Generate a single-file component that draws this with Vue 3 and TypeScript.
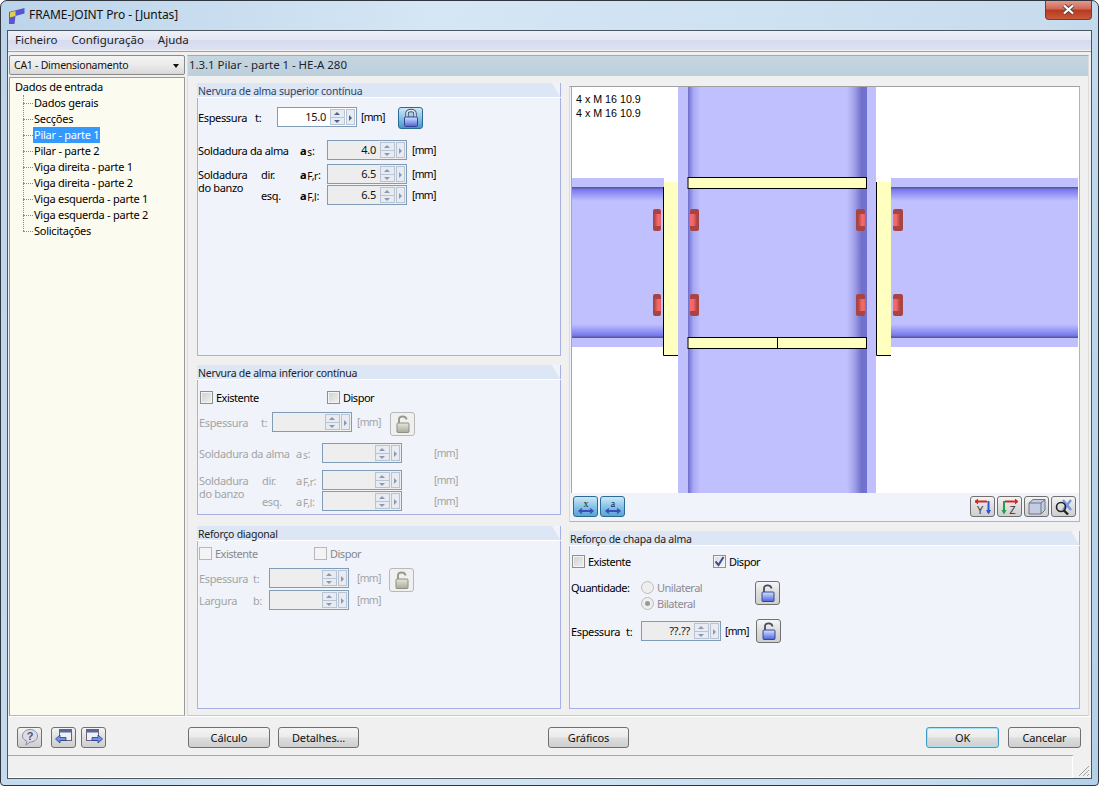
<script setup lang="ts">
interface TreeItem {
  label: string;
  active?: boolean;
}

interface Bolt {
  x: number;
  width: number;
  // where the bright shank sits inside the head
  shankX: number;
  shankWidth: number;
  grad: string;
}

const treeItems: TreeItem[] = [
  { label: 'Dados gerais' },
  { label: 'Secções' },
  { label: 'Pilar - parte 1', active: true },
  { label: 'Pilar - parte 2' },
  { label: 'Viga direita - parte 1' },
  { label: 'Viga direita - parte 2' },
  { label: 'Viga esquerda - parte 1' },
  { label: 'Viga esquerda - parte 2' },
  { label: 'Solicitações' },
];

const menus = ['Ficheiro', 'Configuração', 'Ajuda'];

// bolt rows in the drawing
const boltRows = [209, 294];
const bolts: Bolt[] = [
  { x: 653, width: 8, shankX: 654, shankWidth: 7, grad: 'url(#boltIn)' },
  { x: 690, width: 9, shankX: 690, shankWidth: 7, grad: 'url(#boltOut)' },
  { x: 856, width: 9, shankX: 858, shankWidth: 7, grad: 'url(#boltIn)' },
  { x: 893, width: 10, shankX: 893, shankWidth: 7, grad: 'url(#boltOut)' },
];
</script>

<template>
  <div class="window">
    <div class="titlebar">
      <svg class="app-icon" width="16" height="16" viewBox="0 0 16 16">
        <defs>
          <linearGradient id="lockBody" x1="0" x2="0" y1="0" y2="1">
            <stop offset="0" stop-color="#d4deff" />
            <stop offset="0.35" stop-color="#a4b8f8" />
            <stop offset="1" stop-color="#4c62d4" />
          </linearGradient>
          <linearGradient id="lockGray" x1="0" x2="0" y1="0" y2="1">
            <stop offset="0" stop-color="#e6e6da" />
            <stop offset="1" stop-color="#aaaa9a" />
          </linearGradient>
        </defs>
        <path d="M0 4 L15.5 0 V5.5 L6.5 8 L5.5 16 H0 Z" fill="#5656d0" />
        <path d="M1 4.5 L6.5 3 V8 L1 9.5 Z" fill="#e8d040" />
      </svg>
      <span class="title-text">FRAME-JOINT Pro - [Juntas]</span>
      <div class="close-btn">
        <svg width="15" height="11" viewBox="0 0 15 11">
          <path d="M3 1.5 L12 9.5 M12 1.5 L3 9.5" stroke="#4a4a4a" stroke-width="4" />
          <path d="M3 1.5 L12 9.5 M12 1.5 L3 9.5" stroke="#fff" stroke-width="2.2" />
        </svg>
      </div>
    </div>

    <div class="client">
      <div class="menubar">
        <span v-for="m in menus" :key="m" class="menu-item">{{ m }}</span>
      </div>

      <div class="main">
        <aside class="nav">
          <div class="combo">
            <span>CA1 - Dimensionamento</span>
            <i class="combo-arrow"></i>
          </div>
          <div class="tree">
            <div class="tree-root">Dados de entrada</div>
            <ul class="tree-list">
              <li v-for="item in treeItems" :key="item.label" class="tree-item">
                <span class="tree-dash"></span>
                <span class="tree-label" :class="{ active: item.active }">{{ item.label }}</span>
              </li>
            </ul>
          </div>
        </aside>

        <section class="content">
          <div class="content-head">1.3.1 Pilar - parte 1 - HE-A 280</div>
          <div class="columns">
            <div class="col-left">
              <div class="group group-top">
                <div class="group-title"><span>Nervura de alma superior contínua</span></div>
                <div class="group-body">
                  <div class="row r-first">
                    <span class="lbl" style="width: 57px">Espessura</span>
                    <span class="sym" style="width: 22px">t:</span>
                    <div class="spin active-spin">
                      <span class="spin-val">15.0</span>
                      <span class="spin-btns"><b class="up"></b><b class="down"></b></span>
                      <span class="spin-more"></span>
                    </div>
                    <span class="unit u-near">[mm]</span>
                    <button class="lock lock-blue lock-first">
                      <svg width="18" height="20" viewBox="0 0 18 20">
                        <path d="M5 10 V5.5 C5 1.5 13 1.5 13 5.5 V10" fill="none" stroke="#454c5c" stroke-width="3.4" />
                        <path d="M5 10 V5.5 C5 1.5 13 1.5 13 5.5 V10" fill="none" stroke="#e4ebf4" stroke-width="1.6" />
                        <rect x="2.5" y="9" width="13" height="9.5" rx="1" fill="url(#lockBody)" stroke="#36468c" />
                      </svg>
                    </button>
                  </div>
                  <div class="row r-alma">
                    <span class="lbl" style="width: 102px">Soldadura da alma</span>
                    <span class="sym" style="width: 27px"><b>a</b><small>s</small>:</span>
                    <div class="spin">
                      <span class="spin-val">4.0</span>
                      <span class="spin-btns"><b class="up"></b><b class="down"></b></span>
                      <span class="spin-more"></span>
                    </div>
                    <span class="unit">[mm]</span>
                  </div>
                  <div class="weld">
                    <div class="weld-label" style="width: 63px">Soldadura<br />do banzo</div>
                    <div class="weld-rows">
                      <div class="row">
                        <span class="lbl" style="width: 39px">dir.</span>
                        <span class="sym" style="width: 27px"><b>a</b><small>F,r</small>:</span>
                        <div class="spin">
                          <span class="spin-val">6.5</span>
                          <span class="spin-btns"><b class="up"></b><b class="down"></b></span>
                          <span class="spin-more"></span>
                        </div>
                        <span class="unit">[mm]</span>
                      </div>
                      <div class="row">
                        <span class="lbl" style="width: 39px">esq.</span>
                        <span class="sym" style="width: 27px"><b>a</b><small>F,l</small>:</span>
                        <div class="spin">
                          <span class="spin-val">6.5</span>
                          <span class="spin-btns"><b class="up"></b><b class="down"></b></span>
                          <span class="spin-more"></span>
                        </div>
                        <span class="unit">[mm]</span>
                      </div>
                    </div>
                  </div>
                </div>
              </div>

              <div class="group group-mid">
                <div class="group-title"><span>Nervura de alma inferior contínua</span></div>
                <div class="group-body">
                  <div class="checks checks-mid">
                    <label class="check" style="width: 127px"><i class="box"></i>Existente</label>
                    <label class="check"><i class="box"></i>Dispor</label>
                  </div>
                  <div class="row dis r-mid-t">
                    <span class="lbl" style="width: 62px">Espessura</span>
                    <span class="sym" style="width: 11px">t:</span>
                    <div class="spin">
                      <span class="spin-val"></span>
                      <span class="spin-btns"><b class="up"></b><b class="down"></b></span>
                      <span class="spin-more"></span>
                    </div>
                    <span class="unit">[mm]</span>
                    <button class="lock lock-gray lock-mid">
                      <svg width="16" height="20" viewBox="0 0 16 20">
                        <path d="M4 10 V5 C4 1.5 11 1.5 11.5 5.5" fill="none" stroke="#9a9a8c" stroke-width="2" />
                        <rect x="2" y="9" width="12" height="9.5" rx="1" fill="url(#lockGray)" stroke="#8f8f80" />
                      </svg>
                    </button>
                  </div>
                  <div class="row dis r-mid-a">
                    <span class="lbl" style="width: 97px">Soldadura da alma</span>
                    <span class="sym" style="width: 26px">a<small>s</small>:</span>
                    <div class="spin">
                      <span class="spin-val"></span>
                      <span class="spin-btns"><b class="up"></b><b class="down"></b></span>
                      <span class="spin-more"></span>
                    </div>
                    <span class="unit u-far">[mm]</span>
                  </div>
                  <div class="weld weld-dis dis">
                    <div class="weld-label" style="width: 63px">Soldadura<br />do banzo</div>
                    <div class="weld-rows">
                      <div class="row">
                        <span class="lbl" style="width: 34px">dir.</span>
                        <span class="sym" style="width: 26px">a<small>F,r</small>:</span>
                        <div class="spin">
                          <span class="spin-val"></span>
                          <span class="spin-btns"><b class="up"></b><b class="down"></b></span>
                          <span class="spin-more"></span>
                        </div>
                        <span class="unit u-far">[mm]</span>
                      </div>
                      <div class="row">
                        <span class="lbl" style="width: 34px">esq.</span>
                        <span class="sym" style="width: 26px">a<small>F,l</small>:</span>
                        <div class="spin">
                          <span class="spin-val"></span>
                          <span class="spin-btns"><b class="up"></b><b class="down"></b></span>
                          <span class="spin-more"></span>
                        </div>
                        <span class="unit u-far">[mm]</span>
                      </div>
                    </div>
                  </div>
                </div>
              </div>

              <div class="group group-bot">
                <div class="group-title"><span>Reforço diagonal</span></div>
                <div class="group-body dis">
                  <div class="checks checks-dis">
                    <label class="check" style="width: 115px"><i class="box box-dis"></i>Existente</label>
                    <label class="check"><i class="box box-dis"></i>Dispor</label>
                  </div>
                  <div class="diag">
                    <div class="diag-rows">
                      <div class="row">
                        <span class="lbl" style="width: 54px">Espessura</span>
                        <span class="sym" style="width: 16px">t:</span>
                        <div class="spin">
                          <span class="spin-val"></span>
                          <span class="spin-btns"><b class="up"></b><b class="down"></b></span>
                          <span class="spin-more"></span>
                        </div>
                        <span class="unit u-diag">[mm]</span>
                      </div>
                      <div class="row">
                        <span class="lbl" style="width: 54px">Largura</span>
                        <span class="sym" style="width: 16px">b:</span>
                        <div class="spin">
                          <span class="spin-val"></span>
                          <span class="spin-btns"><b class="up"></b><b class="down"></b></span>
                          <span class="spin-more"></span>
                        </div>
                        <span class="unit u-diag">[mm]</span>
                      </div>
                    </div>
                    <button class="lock lock-gray lock-diag">
                      <svg width="16" height="20" viewBox="0 0 16 20">
                        <path d="M4 10 V5 C4 1.5 11 1.5 11.5 5.5" fill="none" stroke="#9a9a8c" stroke-width="2" />
                        <rect x="2" y="9" width="12" height="9.5" rx="1" fill="url(#lockGray)" stroke="#8f8f80" />
                      </svg>
                    </button>
                  </div>
                </div>
              </div>
            </div>

            <div class="col-right">
              <div class="view-panel">
                <svg class="drawing" width="508" height="406" viewBox="571 87 508 406">
                  <defs>
                    <linearGradient id="colGrad" x1="0" x2="1" y1="0" y2="0">
                      <stop offset="0" stop-color="#6e6ecc" />
                      <stop offset="0.03" stop-color="#a8a8f4" />
                      <stop offset="0.07" stop-color="#c0c0ff" />
                      <stop offset="0.888" stop-color="#c0c0ff" />
                      <stop offset="0.93" stop-color="#a0a0e8" />
                      <stop offset="0.97" stop-color="#7070cc" />
                      <stop offset="1" stop-color="#7272d0" />
                    </linearGradient>
                    <linearGradient id="beamTop" x1="0" x2="0" y1="0" y2="1">
                      <stop offset="0" stop-color="#50508c" />
                      <stop offset="0.2" stop-color="#7a7af0" />
                      <stop offset="1" stop-color="#c0c0ff" />
                    </linearGradient>
                    <linearGradient id="beamBot" x1="0" x2="0" y1="1" y2="0">
                      <stop offset="0" stop-color="#50508c" />
                      <stop offset="0.2" stop-color="#7a7af0" />
                      <stop offset="1" stop-color="#c0c0ff" />
                    </linearGradient>
                    <linearGradient id="boltIn" x1="0" x2="1" y1="0" y2="0">
                      <stop offset="0" stop-color="#a84444" />
                      <stop offset="0.6" stop-color="#f86c6c" />
                      <stop offset="1" stop-color="#e86060" />
                    </linearGradient>
                    <linearGradient id="boltOut" x1="0" x2="1" y1="0" y2="0">
                      <stop offset="0" stop-color="#f86c6c" />
                      <stop offset="0.5" stop-color="#f06464" />
                      <stop offset="1" stop-color="#a84444" />
                    </linearGradient>
                  </defs>
                  <rect x="571" y="87" width="508" height="406" fill="#fff" />

                  <!-- beams -->
                  <rect x="571" y="178" width="93" height="169" fill="#c0c0ff" />
                  <rect x="571" y="187" width="93" height="14" fill="url(#beamTop)" />
                  <rect x="571" y="324" width="93" height="14" fill="url(#beamBot)" />
                  <rect x="891" y="178" width="187" height="169" fill="#c0c0ff" />
                  <rect x="891" y="187" width="187" height="14" fill="url(#beamTop)" />
                  <rect x="891" y="324" width="187" height="14" fill="url(#beamBot)" />

                  <!-- end plates -->
                  <path d="M664 182 H678 V355 H664 Z" fill="#ffffc0" />
                  <path d="M663.5 187 V355.5 H678" fill="none" stroke="#000" />
                  <path d="M876 182 H891 V355 H876 Z" fill="#ffffc0" />
                  <path d="M876.5 182 V355.5 H891" fill="none" stroke="#000" />

                  <!-- column -->
                  <rect x="678" y="87" width="198" height="406" fill="#c0c0ff" />
                  <rect x="688" y="87" width="179" height="406" fill="url(#colGrad)" />

                  <!-- stiffeners -->
                  <rect x="688" y="177.5" width="178.5" height="11" fill="#ffffc0" stroke="#000" />
                  <rect x="688" y="337.5" width="178.5" height="11" fill="#ffffc0" stroke="#000" />
                  <line x1="777.5" x2="777.5" y1="337" y2="349" stroke="#000" />

                  <!-- bolts -->
                  <g v-for="y in boltRows" :key="y">
                    <g v-for="b in bolts" :key="b.x">
                      <rect :x="b.x" :y="y" :width="b.width" height="22" rx="2" fill="#a84444" />
                      <rect :x="b.shankX" :y="y + 5" :width="b.shankWidth" height="12" :fill="b.grad" />
                    </g>
                  </g>

                  <line x1="571.5" x2="571.5" y1="87" y2="493" stroke="#a8a8a8" />
                  <text x="576" y="103" class="draw-text">4 x M 16 10.9</text>
                  <text x="576" y="117" class="draw-text">4 x M 16 10.9</text>
                </svg>
                <div class="view-tools">
                  <div class="tool-group">
                    <button class="tool tool-blue">
                      <svg width="20" height="16" viewBox="0 0 20 16">
                        <text x="10" y="8" text-anchor="middle" class="tool-letter">x</text>
                        <path d="M4 12 H16" stroke="#3a50b8" stroke-width="2" />
                        <path d="M6 9.5 L3 12 L6 14.5 M14 9.5 L17 12 L14 14.5" fill="none" stroke="#3a50b8" stroke-width="1.4" />
                      </svg>
                    </button>
                    <button class="tool tool-blue">
                      <svg width="20" height="16" viewBox="0 0 20 16">
                        <text x="10" y="8" text-anchor="middle" class="tool-letter">a</text>
                        <path d="M4 12 H16" stroke="#3a50b8" stroke-width="2" />
                        <path d="M6 9.5 L3 12 L6 14.5 M14 9.5 L17 12 L14 14.5" fill="none" stroke="#3a50b8" stroke-width="1.4" />
                      </svg>
                    </button>
                  </div>
                  <div class="tool-group">
                    <button class="tool">
                      <svg width="20" height="18" viewBox="0 0 20 18">
                        <path d="M2 3.5 H14" stroke="#d02828" stroke-width="2" />
                        <path d="M5 1 L2 3.5 L5 6" fill="#d02828" stroke="#d02828" stroke-width="1" />
                        <path d="M15.5 3 V15" stroke="#2858d8" stroke-width="2" />
                        <path d="M13 12 L15.5 16.5 L18 12" fill="#2858d8" />
                        <text x="7" y="16" text-anchor="middle" class="tool-axis">Y</text>
                      </svg>
                    </button>
                    <button class="tool">
                      <svg width="20" height="18" viewBox="0 0 20 18">
                        <path d="M5 3.5 H17" stroke="#d02828" stroke-width="2" />
                        <path d="M15 1 L18 3.5 L15 6" fill="#d02828" stroke="#d02828" stroke-width="1" />
                        <path d="M4 3 V15" stroke="#20a040" stroke-width="2" />
                        <path d="M1.5 12 L4 16.5 L6.5 12" fill="#20a040" />
                        <text x="12.5" y="16" text-anchor="middle" class="tool-axis">Z</text>
                      </svg>
                    </button>
                    <button class="tool">
                      <svg width="20" height="18" viewBox="0 0 20 18">
                        <path d="M2 5 L6 1.5 H18 V12 L14 16 H2 Z" fill="#c4cce4" stroke="#6c7488" />
                        <path d="M2 5 H14 V16 M14 5 L18 1.5" fill="none" stroke="#6c7488" />
                      </svg>
                    </button>
                    <button class="tool">
                      <svg width="20" height="18" viewBox="0 0 20 18">
                        <path d="M9 2 L17 12 M17 2 L9 12" stroke="#7a94e0" stroke-width="2.4" />
                        <circle cx="7" cy="9" r="4.5" fill="none" stroke="#222" stroke-width="1.6" />
                        <path d="M10 12.5 L14 16.5" stroke="#222" stroke-width="2.4" />
                      </svg>
                    </button>
                  </div>
                </div>
              </div>

              <div class="group group-plate">
                <div class="group-title"><span>Reforço de chapa da alma</span></div>
                <div class="group-body">
                  <div class="checks checks-plate">
                    <label class="check" style="width: 141px"><i class="box"></i>Existente</label>
                    <label class="check">
                      <i class="box box-on">
                        <svg width="11" height="11" viewBox="0 0 11 11">
                          <path d="M1.5 5.5 L4.5 9 L9.5 1" fill="none" stroke="#3c4f90" stroke-width="2" />
                        </svg>
                      </i>
                      Dispor
                    </label>
                  </div>
                  <div class="qty">
                    <span class="qty-label">Quantidade:</span>
                    <div class="radios">
                      <label class="radio"><i class="dot"></i>Unilateral</label>
                      <label class="radio"><i class="dot dot-on"></i>Bilateral</label>
                    </div>
                    <button class="lock lock-light lock-qty">
                      <svg width="16" height="20" viewBox="0 0 16 20">
                        <path d="M4 10 V5 C4 1.5 11 1.5 11.5 5.5" fill="none" stroke="#444c60" stroke-width="1.8" />
                        <rect x="2" y="9" width="12" height="9.5" rx="1" fill="url(#lockBody)" stroke="#36468c" />
                      </svg>
                    </button>
                  </div>
                  <div class="row r-plate">
                    <span class="lbl" style="width: 55px">Espessura</span>
                    <span class="sym" style="width: 15px">t:</span>
                    <div class="spin">
                      <span class="spin-val">??.??</span>
                      <span class="spin-btns"><b class="up"></b><b class="down"></b></span>
                      <span class="spin-more"></span>
                    </div>
                    <span class="unit u-near">[mm]</span>
                    <button class="lock lock-light lock-plate">
                      <svg width="16" height="20" viewBox="0 0 16 20">
                        <path d="M4 10 V5 C4 1.5 11 1.5 11.5 5.5" fill="none" stroke="#444c60" stroke-width="1.8" />
                        <rect x="2" y="9" width="12" height="9.5" rx="1" fill="url(#lockBody)" stroke="#36468c" />
                      </svg>
                    </button>
                  </div>
                </div>
              </div>
            </div>
          </div>
        </section>
      </div>

      <footer class="footer">
        <div class="foot-icons">
          <button class="btn-icon help">
            <svg width="18" height="18" viewBox="0 0 18 18">
              <path d="M9 1.5 C13.5 1.5 16.5 4.5 16.5 8 C16.5 11.5 13.5 14 9 14 L5 17 L5.8 13.2 C3 12 1.5 10.2 1.5 8 C1.5 4.5 4.5 1.5 9 1.5 Z" fill="#dcdce8" stroke="#8c8c9c" />
              <text x="9" y="12" text-anchor="middle" class="help-q">?</text>
            </svg>
          </button>
          <button class="btn-icon nav-prev">
            <svg width="20" height="18" viewBox="0 0 20 18">
              <rect x="5.5" y="1.5" width="12" height="11" fill="#eef0f6" stroke="#667" />
              <rect x="5.5" y="1.5" width="12" height="3" fill="#5a6898" />
              <path d="M1.5 11 L6 7 V9.5 H12 V12.5 H6 V15 Z" fill="#6c94ee" stroke="#2c3f80" stroke-width=".8" />
            </svg>
          </button>
          <button class="btn-icon nav-next">
            <svg width="20" height="18" viewBox="0 0 20 18">
              <rect x="2.5" y="1.5" width="12" height="11" fill="#eef0f6" stroke="#667" />
              <rect x="2.5" y="1.5" width="12" height="3" fill="#5a6898" />
              <path d="M18.5 11 L14 7 V9.5 H8 V12.5 H14 V15 Z" fill="#6c94ee" stroke="#2c3f80" stroke-width=".8" />
            </svg>
          </button>
        </div>
        <button class="btn w82 ml-calc">Cálculo</button>
        <button class="btn w81 ml-det">Detalhes...</button>
        <button class="btn w81 ml-graf">Gráficos</button>
        <button class="btn btn-default w73 ml-ok">OK</button>
        <button class="btn w73 ml-can">Cancelar</button>
      </footer>

      <div class="statusbar">
        <svg class="grip" width="12" height="12" viewBox="0 0 12 12">
          <path d="M11 1 L1 11 M11 5 L5 11 M11 9 L9 11" stroke="#a0a0a0" stroke-width="1" />
        </svg>
      </div>
    </div>
  </div>
</template>

<style>
html,
body {
  margin: 0;
  background: #fff;
}
</style>

<style scoped>
.window {
  width: 1099px;
  height: 786px;
  box-sizing: border-box;
  padding: 0 6px 6px 6px;
  border: 1px solid #2f3640;
  border-radius: 7px 7px 4px 4px;
  background: linear-gradient(100deg, #bcd4ea 0%, #d5e6f4 35%, #cfe2f2 60%, #c8dcee 85%, #b4d0e8 100%);
  font-family: 'Noto Sans', Tahoma, sans-serif;
  font-size: 11px;
  letter-spacing: -0.25px;
  color: #000;
  display: flex;
  flex-direction: column;
  overflow: hidden;
}

.titlebar {
  height: 29px;
  flex: none;
  display: flex;
  align-items: center;
  position: relative;
  padding-left: 2px;
}

.app-icon {
  margin-right: 4px;
  margin-top: 1px;
}

.title-text {
  font-size: 12px;
  letter-spacing: -0.1px;
  color: #111;
  margin-top: -3px;
}

.close-btn {
  position: absolute;
  top: -1px;
  right: 0;
  width: 47px;
  height: 20px;
  box-sizing: border-box;
  border: 1px solid #7a3a30;
  border-top: none;
  border-radius: 0 0 4px 4px;
  background: linear-gradient(#e8a090 0%, #d06a58 45%, #b83a22 55%, #c85a3a 100%);
  display: flex;
  align-items: center;
  justify-content: center;
}

.client {
  flex: 1;
  min-height: 0;
  border: 1px solid #4a5562;
  background: #f0f0f0;
  display: flex;
  flex-direction: column;
}

.menubar {
  height: 19px;
  flex: none;
  display: flex;
  align-items: center;
  gap: 14px;
  padding: 0 0 2px 7px;
  box-sizing: border-box;
  background: linear-gradient(#eef0f8 0%, #e4e6f4 45%, #d6dcee 50%, #dce2f2 100%);
  font-size: 11.5px;
  letter-spacing: 0;
  color: #222;
}

.main {
  flex: 1;
  min-height: 0;
  display: flex;
  padding: 3px 2px 0 1px;
  gap: 2px;
  border-top: 1px solid #a0a0a0;
  margin-top: 1px;
}

.nav {
  width: 176px;
  flex: none;
  display: flex;
  flex-direction: column;
}

.combo {
  height: 20px;
  box-sizing: border-box;
  border: 1px solid #8a8a8a;
  border-radius: 2px;
  background: linear-gradient(#f4f4f4 0%, #ebebeb 50%, #d8d8d8 100%);
  display: flex;
  align-items: center;
  padding-left: 4px;
  position: relative;
  font-size: 10.5px;
  color: #111;
}

.combo-arrow {
  position: absolute;
  right: 5px;
  top: 8px;
  border-style: solid;
  border-width: 4px 3.5px 0;
  border-color: #111 transparent transparent;
}

.tree {
  flex: 1;
  margin-top: 2px;
  border: 1px solid #9a9a9a;
  border-bottom-color: #b8b8b8;
  background: #fbfbf0;
  padding: 1px 0 0 5px;
  overflow: hidden;
}

.tree-root {
  height: 16px;
  line-height: 16px;
}

.tree-list {
  list-style: none;
  margin: 0;
  padding: 0 0 0 8px;
  position: relative;
}

.tree-list::before {
  content: '';
  position: absolute;
  left: 8px;
  top: 0;
  bottom: 8px;
  border-left: 1px dotted #8a8a8a;
}

.tree-item {
  height: 16px;
  display: flex;
  align-items: center;
}

.tree-dash {
  width: 10px;
  flex: none;
  border-top: 1px dotted #8a8a8a;
}

.tree-label {
  padding: 0 1px;
  line-height: 16px;
  white-space: nowrap;
}

.tree-label.active {
  background: #3399ff;
  color: #fff;
}

.content {
  flex: 1;
  min-width: 0;
  display: flex;
  flex-direction: column;
  border: 1px solid #dcdcdc;
  border-bottom-color: #c8c8c8;
  border-top-color: #a8a8a8;
}

.content-head {
  height: 20px;
  flex: none;
  background: linear-gradient(#c6d6e0, #bccfdc);
  line-height: 18px;
  padding-left: 1px;
  font-size: 11.5px;
  letter-spacing: -0.05px;
  color: #1c2530;
}

.columns {
  flex: 1;
  display: flex;
  padding-left: 9px;
}

.col-left {
  width: 364px;
  flex: none;
  padding-top: 7px;
  display: flex;
  flex-direction: column;
}

.col-right {
  margin-left: 8px;
  width: 511px;
  flex: none;
  padding-top: 10px;
  display: flex;
  flex-direction: column;
}

.group {
  box-sizing: border-box;
  display: flex;
  flex-direction: column;
  background: #f0f3f9;
  border: solid #a8b0e4;
  border-width: 0 1px 1px;
}

.group-top {
  height: 273px;
}

.group-mid {
  height: 150px;
  margin-top: 9px;
}

.group-bot {
  height: 183px;
  margin-top: 11px;
}

.group-plate {
  height: 178px;
  margin-top: 9px;
}

.group-title {
  box-sizing: border-box;
  height: 15px;
  flex: none;
  margin: 0 -1px;
  background: #dce6f4;
  border-bottom: 1px solid #fff;
  clip-path: polygon(0 0, calc(100% - 9px) 0, 100% 100%, 0 100%);
  color: #334466;
  line-height: 16px;
  font-size: 10.5px;
  padding-left: 1px;
}

.group-mid .group-title,
.group-bot .group-title,
.group-plate .group-title {
  color: #222;
}

.group-body {
  flex: 1;
}

.row {
  display: flex;
  align-items: center;
  height: 20px;
}

.lbl {
  flex: none;
  white-space: nowrap;
  letter-spacing: -0.35px;
}

.sym {
  flex: none;
  white-space: nowrap;
}

.sym b {
  font-weight: 700;
  font-size: 11px;
}

.sym small {
  font-size: 10px;
  position: relative;
  top: 1px;
  margin-left: 1px;
}

.r-first {
  margin-top: 9px;
}

.r-alma {
  margin-top: 13px;
}

.weld {
  display: flex;
  margin-top: 4px;
}

.weld-label {
  flex: none;
  line-height: 13px;
  padding-top: 4px;
  letter-spacing: -0.35px;
}

.weld-rows {
  display: flex;
  flex-direction: column;
  gap: 1px;
}

.spin {
  box-sizing: border-box;
  width: 80px;
  height: 20px;
  flex: none;
  border: 1px solid #7f9db9;
  background: #ededed;
  display: flex;
  align-items: stretch;
  padding: 1px;
  gap: 1px;
}

.active-spin {
  background: #fff;
}

.spin-val {
  flex: 1;
  text-align: right;
  line-height: 16px;
  padding-right: 3px;
  color: #111;
}

.spin-btns {
  width: 13px;
  display: flex;
  flex-direction: column;
  border: 1px solid #b8c4d4;
  background: #e8ecf2;
}

.spin-btns b {
  flex: 1;
  position: relative;
  display: block;
}

.spin-btns b::after {
  content: '';
  position: absolute;
  left: 3px;
  top: 2px;
  border-style: solid;
  border-color: transparent;
}

.spin-btns .up {
  border-bottom: 1px solid #b8c4d4;
}

.spin-btns .up::after {
  border-width: 0 3px 3px;
  border-bottom-color: #8a98b0;
}

.spin-btns .down::after {
  border-width: 3px 3px 0;
  border-top-color: #8a98b0;
}

.active-spin .spin-btns .up::after {
  border-bottom-color: #4a6090;
}

.active-spin .spin-btns .down::after {
  border-top-color: #4a6090;
}

.spin-more {
  width: 9px;
  box-sizing: border-box;
  border: 1px solid #b8c4d4;
  background: #e8ecf2;
  position: relative;
}

.spin-more::after {
  content: '';
  position: absolute;
  left: 2px;
  top: 5px;
  border-style: solid;
  border-width: 3px 0 3px 3px;
  border-color: transparent transparent transparent #8a98b0;
}

.active-spin .spin-more::after {
  border-left-color: #4a6090;
}

.unit {
  margin-left: 5px;
  flex: none;
  width: 23px;
  font-size: 10.5px;
  letter-spacing: -0.7px;
  white-space: nowrap;
}

.u-near {
  margin-left: 4px;
}

.u-far {
  margin-left: 32px;
}

.u-diag {
  margin-left: 8px;
}

.lock {
  box-sizing: border-box;
  width: 25px;
  height: 24px;
  flex: none;
  padding: 0;
  display: flex;
  align-items: center;
  justify-content: center;
  border-radius: 3px;
  border: 1px solid #707070;
  background: linear-gradient(#f6f6f6, #dcdcdc 50%, #cfcfcf);
}

.lock-blue {
  height: 22px;
  background: linear-gradient(#cfe6f6, #88c4e8 50%, #4a94cc);
  border-color: #2c6a96;
}

.lock-gray {
  border-color: #b8b8b8;
  background: #f0f0f0;
}

.lock-first {
  margin: 2px 0 0 14px;
}

.dis {
  color: #a4a4a4;
}

.dis .spin {
  background: #eeeeee;
}

.checks {
  display: flex;
  height: 13px;
  align-items: center;
  color: #000;
}

.checks-mid {
  padding: 11px 0 0 2px;
}

.check {
  display: flex;
  align-items: center;
  flex: none;
  letter-spacing: -0.5px;
}

.box {
  box-sizing: border-box;
  width: 13px;
  height: 13px;
  margin-right: 3px;
  border: 1px solid #8e8f8f;
  background: linear-gradient(135deg, #d0d0d0, #f0f0f0);
  box-shadow: inset 0 0 0 1px #f4f4f4;
  display: inline-flex;
  align-items: center;
  justify-content: center;
}

.box-dis {
  background: #f4f4f4;
  border-color: #b8b8b8;
  box-shadow: none;
}

.box-on {
  background: linear-gradient(135deg, #dcdcdc, #f4f4f4);
}

.r-mid-t {
  margin-top: 8px;
  padding-left: 1px;
}

.lock-mid {
  margin: 4px 0 0 10px;
}

.r-mid-a {
  margin-top: 11px;
  padding-left: 1px;
}

.weld-dis {
  margin-top: 7px;
  padding-left: 1px;
}

.checks-dis {
  color: #888;
  padding: 6px 0 0 1px;
}

.diag {
  display: flex;
  margin-top: 8px;
  padding-left: 1px;
}

.diag-rows {
  display: flex;
  flex-direction: column;
  gap: 2px;
}

.lock-diag {
  margin-left: 9px;
}

.view-panel {
  height: 436px;
  box-sizing: border-box;
  flex: none;
  background: #f0f3f9;
  border: 1px solid #a8b0e4;
  border-top-color: #a0a0a0;
  border-left: 1px solid #d4d8e4;
  padding-left: 1px;
}

.drawing {
  display: block;
}

.draw-text {
  font-family: 'Liberation Sans', sans-serif;
  font-size: 10.7px;
  letter-spacing: 0;
  fill: #000;
}

.view-tools {
  display: flex;
  justify-content: space-between;
  padding: 3px 3px 0 2px;
}

.tool-group {
  display: flex;
  gap: 2px;
}

.tool {
  box-sizing: border-box;
  width: 25px;
  height: 21px;
  padding: 0;
  display: flex;
  align-items: center;
  justify-content: center;
  border-radius: 3px;
  border: 1px solid #707070;
  background: linear-gradient(#f4f4f4, #dedede 50%, #cfcfcf);
}

.tool-blue {
  border-color: #2c6a96;
  background: linear-gradient(#cfe6f6, #88c4e8 50%, #5aa4d4);
}

.tool-letter {
  font-family: 'Liberation Serif', serif;
  font-size: 10px;
  fill: #222;
}

.tool-axis {
  font-family: 'Liberation Sans', sans-serif;
  font-size: 10px;
  fill: #333;
}

.checks-plate {
  padding: 9px 0 0 2px;
}

.qty {
  display: flex;
  margin-top: 11px;
  padding-left: 1px;
  height: 35px;
}

.qty-label {
  width: 70px;
  flex: none;
  line-height: 14px;
  margin-top: 2px;
  letter-spacing: -0.5px;
}

.radios {
  display: flex;
  flex-direction: column;
  width: 114px;
  flex: none;
}

.radio {
  height: 16px;
  display: flex;
  align-items: center;
  color: #8a8a96;
  letter-spacing: -0.5px;
}

.dot {
  box-sizing: border-box;
  width: 13px;
  height: 13px;
  margin-right: 3px;
  border-radius: 50%;
  border: 1px solid #bcbcbc;
  background: #eeeeee;
  display: inline-block;
  position: relative;
}

.dot-on::after {
  content: '';
  position: absolute;
  left: 3px;
  top: 3px;
  width: 5px;
  height: 5px;
  border-radius: 50%;
  background: #9a9a9a;
}

.lock-qty {
  margin-top: 2px;
}

.lock-plate {
  margin-left: 8px;
}

.r-plate {
  margin-top: 7px;
  padding-left: 1px;
}

.footer {
  height: 39px;
  flex: none;
  box-sizing: border-box;
  display: flex;
  align-items: center;
  padding: 2px 0 0 9px;
  border-top: 1px solid #fff;
}

.foot-icons {
  display: flex;
  width: 89px;
  flex: none;
}

.btn-icon {
  box-sizing: border-box;
  width: 25px;
  height: 21px;
  padding: 0;
  display: flex;
  align-items: center;
  justify-content: center;
  border-radius: 3px;
  border: 1px solid #707070;
  background: linear-gradient(#f4f4f4, #dedede 50%, #cfcfcf);
}

.nav-prev {
  margin-left: 9px;
}

.nav-next {
  margin-left: 5px;
}

.help-q {
  font-family: 'Liberation Sans', sans-serif;
  font-weight: 700;
  font-size: 11px;
  fill: #505070;
}

.btn {
  box-sizing: border-box;
  height: 21px;
  padding: 0;
  flex: none;
  border-radius: 3px;
  border: 1px solid #707070;
  background: linear-gradient(#f4f4f4 0%, #ebebeb 48%, #dddddd 52%, #cfcfcf 100%);
  font: inherit;
  letter-spacing: -0.1px;
  color: #111;
}

.btn-default {
  border-color: #3c9cc8;
  box-shadow: inset 0 0 0 1px #a8e0f4;
}

.w73 { width: 73px; }
.w81 { width: 81px; }
.w82 { width: 82px; }

.ml-calc { margin-left: 82px; }
.ml-det { margin-left: 8px; }
.ml-graf { margin-left: 189px; }
.ml-ok { margin-left: 297px; }
.ml-can { margin-left: 9px; }

.statusbar {
  height: 23px;
  flex: none;
  box-sizing: border-box;
  border-top: 1px solid #a8a8a8;
  position: relative;
  margin-right: 18px;
  box-shadow: inset -1px 0 0 #fff, inset 0 -1px 0 #fff;
}

.grip {
  position: absolute;
  right: -17px;
  bottom: 1px;
}
</style>
